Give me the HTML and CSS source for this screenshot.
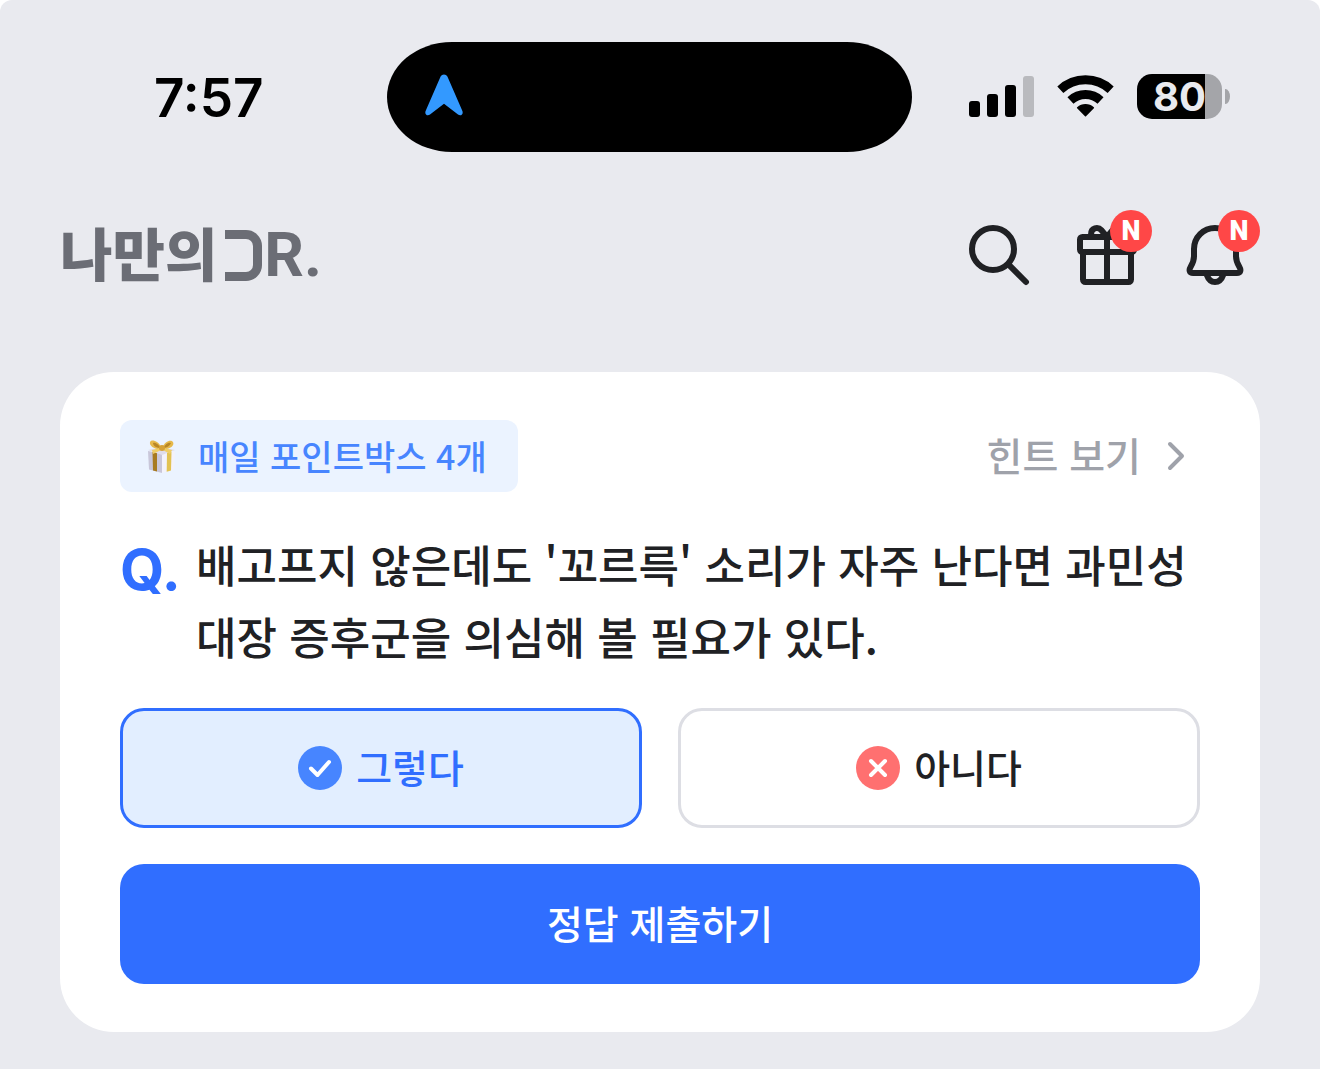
FILE: index.html
```html
<!DOCTYPE html>
<html lang="ko">
<head>
  <meta charset="UTF-8">
  <meta name="viewport" content="width=device-width, initial-scale=1.0">
  <title>나만의 DR.</title>
  <link rel="stylesheet" href="styles.css">
</head>
<body>
  <div class="app">
    <div class="status-bar">
      <span class="time">7:57</span>
      <div class="island">
        <svg width="40" height="42" viewBox="0 0 40 42" fill="#3399ff" aria-hidden="true">
          <path d="M16.6 2.6C18 -.2 22 -.2 23.4 2.6L38.400 37C39.600 40.200 36.800 42.600 34 40.600L20 29.800L6 40.600C3.200 42.600 .4 40.200 1.600 37Z"/>
        </svg>
      </div>
      <div class="status-icons">
        <svg width="65" height="41" viewBox="0 0 65 41" aria-hidden="true">
          <rect x="0" y="25" width="11" height="16" rx="3"/>
          <rect x="18" y="18" width="11" height="23" rx="3"/>
          <rect x="36" y="9" width="11" height="32" rx="3"/>
          <rect x="54" y="0" width="11" height="41" rx="3" fill="#b9babe"/>
        </svg>
        <svg width="57" height="42" viewBox="0 0 58 42" fill="none" stroke="#000" stroke-width="9" aria-hidden="true">
          <path d="M3.400 14.600A37.500 37.500 0 0 1 54.600 14.600"/>
          <path d="M13.700 25.500A22.500 22.500 0 0 1 44.300 25.500"/>
          <path d="M29 41L21 33A12 12 0 0 1 37 33Z" fill="#000" stroke-width="1.500" stroke-linejoin="round"/>
        </svg>
        <div class="battery">
          <span class="battery-level">80</span>
          <span class="battery-tip"></span>
        </div>
      </div>
    </div>

    <header class="header">
      <a href="#" class="logo" aria-label="나만의 DR.">
        <span class="logo-name">나만의</span>
        <span class="logo-mark"></span>
        <span class="logo-dr">R.</span>
      </a>
      <nav class="actions">
        <button type="button" class="icon-button" aria-label="검색">
          <svg class="icon" viewBox="0 0 24 24" aria-hidden="true">
            <circle cx="10" cy="10" r="7"/>
            <path d="M15.300 15.300L21 21"/>
          </svg>
        </button>
        <button type="button" class="icon-button" aria-label="선물">
          <svg class="icon" viewBox="0 0 24 24" aria-hidden="true">
            <rect x="3" y="6" width="18" height="5" rx=".8"/>
            <path d="M4 11V20.200A.8 .8 0 0 0 4.800 21H19.200A.8 .8 0 0 0 20 20.200V11M12 6V21"/>
            <path d="M6.700 6V5C6.700 3 8.900 2.400 10.200 3.800L12 6L13.800 3.800C15.100 2.400 17.300 3 17.300 5V6"/>
          </svg>
          <span class="badge">N</span>
        </button>
        <button type="button" class="icon-button" aria-label="알림">
          <svg class="icon" viewBox="0 0 24 24" aria-hidden="true">
            <path d="M12 3C8.100 3 5 6.100 5 10V12.400C5 13.700 4.600 14.700 3.900 15.900C3.200 17.100 3.500 18 4.700 18H19.300C20.500 18 20.800 17.100 20.100 15.900C19.400 14.700 19 13.700 19 12.400V10C19 6.100 15.900 3 12 3Z"/>
            <path d="M9.200 18.500C9.800 20.200 10.800 21 12 21S14.200 20.200 14.800 18.500"/>
          </svg>
          <span class="badge">N</span>
        </button>
      </nav>
    </header>

    <main class="card">
      <div class="card-top">
        <div class="tag">
          <svg width="36" height="36" viewBox="0 0 36 36" aria-hidden="true">
            <path d="M4 13L18 16V35L5 31.500Z" fill="#c9c7da"/>
            <path d="M18 16L31 13L30 31.500L18 35Z" fill="#f3f2fb"/>
            <path d="M4 12L18 9L31 12L18 17Z" fill="#dfdcea"/>
            <path d="M8.500 14L13 15.200V33.600L9 32.500Z" fill="#a77a20"/>
            <path d="M23 15L27.500 13.800L27 32.500L22.700 33.700Z" fill="#e2c252"/>
            <path d="M18 10C14 2 7 1 6 4C5 8 11 12 18 11C25 12 31 8 29 4C27 1 21 3 18 10Z" fill="#e6b94c"/>
            <path d="M17 10C14 5 10 4 9 5C9 8 13 10 17 10ZM19 10C22 5 25 4 27 5C26 8 22 10 19 10Z" fill="#b98727"/>
            <path d="M16 10L8 12L9 16L17 12ZM20 10L28 12L26 16L19 12Z" fill="#efcd66"/>
            <circle cx="18" cy="10" r="3" fill="#d6a137"/>
          </svg>
          <span>매일 포인트박스 4개</span>
        </div>
        <a href="#" class="hint">
          <span class="label">힌트 보기</span>
          <svg width="36" height="36" viewBox="0 0 36 36" fill="none" stroke="#9fa2aa" stroke-width="4" stroke-linecap="round" stroke-linejoin="round" aria-hidden="true">
            <path d="M12 6L24 18L12 30"/>
          </svg>
        </a>
      </div>

      <form class="quiz">
        <div class="question">
          <span class="question-mark">Q.</span>
          <p class="question-text">배고프지 않은데도 '꼬르륵' 소리가 자주 난다면 과민성 대장 증후군을 의심해 볼 필요가 있다.</p>
        </div>
        <div class="options">
          <label class="option">
            <input type="radio" name="answer" value="yes" checked>
            <svg width="44" height="44" viewBox="0 0 44 44" fill="none" stroke="#fff" stroke-width="4" stroke-linecap="round" stroke-linejoin="round" aria-hidden="true">
              <circle cx="22" cy="22" r="22" fill="#4785ff" stroke="none"/>
              <path d="M13 22.500L19.500 29L31 16"/>
            </svg>
            <span class="label">그렇다</span>
          </label>
          <label class="option">
            <input type="radio" name="answer" value="no">
            <svg width="44" height="44" viewBox="0 0 44 44" fill="none" stroke="#fff" stroke-width="4" stroke-linecap="round" aria-hidden="true">
              <circle cx="22" cy="22" r="22" fill="#ff7070" stroke="none"/>
              <path d="M15 15L29 29M29 15L15 29"/>
            </svg>
            <span class="label">아니다</span>
          </label>
        </div>
        <button type="button" class="submit">정답 제출하기</button>
      </form>
    </main>
  </div>
</body>
</html>
```

FILE: styles.css
```css
* {
  box-sizing: border-box;
}
body {
  margin: 0;
  background-color: #fff;
  color: #202124;
  font-family: "Noto Sans CJK KR", "Noto Sans", sans-serif;
  font-weight: 500;
}
button {
  font: inherit;
  border: none;
  padding: 0;
  cursor: pointer;
}
a {
  color: inherit;
  text-decoration: none;
}
svg {
  display: block;
  flex-shrink: 0;
}
.app {
  min-height: 100vh;
  padding-bottom: 36px;
  background-color: #e9eaef;
  border-radius: 12px 12px 0 0;
}

/* status bar */
.status-bar {
  display: grid;
  grid-template-columns: 1fr auto 1fr;
  align-items: center;
  padding: 42px 90px 0 69px;
  color: #000;
  font-family: Inter, sans-serif;
}
.time {
  padding: 2px 0 0 85px;
  font-size: 53px;
  font-weight: 600;
  line-height: 64px;
}
.island {
  display: flex;
  align-items: center;
  width: 525px;
  height: 110px;
  padding: 0 37px 4px;
  background-color: #000;
  border-radius: 65px / 55px;
}
.status-icons {
  display: flex;
  align-items: center;
  justify-content: flex-end;
  gap: 23px;
  padding-bottom: 2px;
}
.battery {
  display: flex;
  align-items: center;
  gap: 3px;
}
.battery-level {
  width: 85px;
  border-radius: 15px;
  background: linear-gradient(to right, #000 80%, #a4a5a9 80%);
  color: #e9eaef;
  font-size: 40px;
  font-weight: 700;
  line-height: 45px;
  text-align: center;
}
.battery-tip {
  width: 5px;
  height: 15px;
  border-radius: 0 5px 5px 0 / 0 8px 8px 0;
  background-color: #a4a5a9;
}

/* header */
.header {
  display: flex;
  align-items: center;
  justify-content: space-between;
  padding: 67px 69px 0 60px;
}
.logo {
  display: flex;
  align-items: center;
  color: #6b6d75;
}
.logo-name {
  padding-bottom: 8px;
  font-size: 57px;
  font-weight: 900;
  line-height: 64px;
}
.logo-mark {
  width: 37px;
  height: 51px;
  margin: 0 2px 0 8px;
  border: 9px solid #6b6d75;
  border-left: none;
  border-radius: 0 16px 16px 0;
}
.logo-dr {
  font-family: Roboto, sans-serif;
  font-size: 62px;
  font-weight: 700;
  line-height: 72px;
}
.actions {
  display: flex;
  gap: 36px;
}
.icon-button {
  position: relative;
  background: none;
}
.icon {
  width: 72px;
  height: 72px;
  fill: none;
  stroke: #202124;
  stroke-width: 2;
  stroke-linecap: round;
  stroke-linejoin: round;
}
.badge {
  position: absolute;
  top: -9px;
  right: -9px;
  width: 42px;
  height: 42px;
  border-radius: 50%;
  background-color: #ff4747;
  color: #fff;
  font-family: Roboto, sans-serif;
  font-size: 27px;
  font-weight: 900;
  line-height: 42px;
  text-align: center;
}

/* quiz card */
.card {
  margin: 81px 60px 0;
  padding: 48px 60px;
  background-color: #fff;
  border-radius: 54px;
}
.card-top {
  display: flex;
  align-items: center;
  justify-content: space-between;
}
.tag {
  display: flex;
  align-items: center;
  gap: 18px;
  padding: 0 31px 0 24px;
  border-radius: 12px;
  background-color: #ebf3ff;
  color: #4785ff;
  font-size: 34px;
  line-height: 72px;
}
.hint {
  display: flex;
  align-items: center;
  gap: 17px;
  padding-right: 6px;
  color: #9fa2aa;
  font-size: 39px;
  line-height: 68px;
}
.label {
  padding-bottom: 4px;
}
.question {
  display: flex;
  margin: 36px 0;
}
.question-mark {
  flex: 0 0 76px;
  color: #306eff;
  font-family: Inter, sans-serif;
  font-size: 57px;
  font-weight: 700;
  line-height: 84px;
}
.question-text {
  margin: 0;
  font-size: 44px;
  line-height: 72px;
}
.options {
  display: grid;
  grid-template-columns: 1fr 1fr;
  gap: 36px;
  margin-bottom: 36px;
}
.option {
  display: flex;
  align-items: center;
  justify-content: center;
  gap: 14px;
  height: 120px;
  border: 3px solid #dddee4;
  border-radius: 24px;
  font-size: 39px;
  cursor: pointer;
}
.option input {
  position: absolute;
  margin: 0;
  opacity: 0;
}
.option:has(input:checked) {
  border-color: #306eff;
  background-color: #e2eeff;
  color: #306eff;
}
.submit {
  display: block;
  width: 100%;
  height: 120px;
  padding-bottom: 4px;
  border-radius: 24px;
  background-color: #306eff;
  color: #fff;
  font-size: 39px;
}
```
